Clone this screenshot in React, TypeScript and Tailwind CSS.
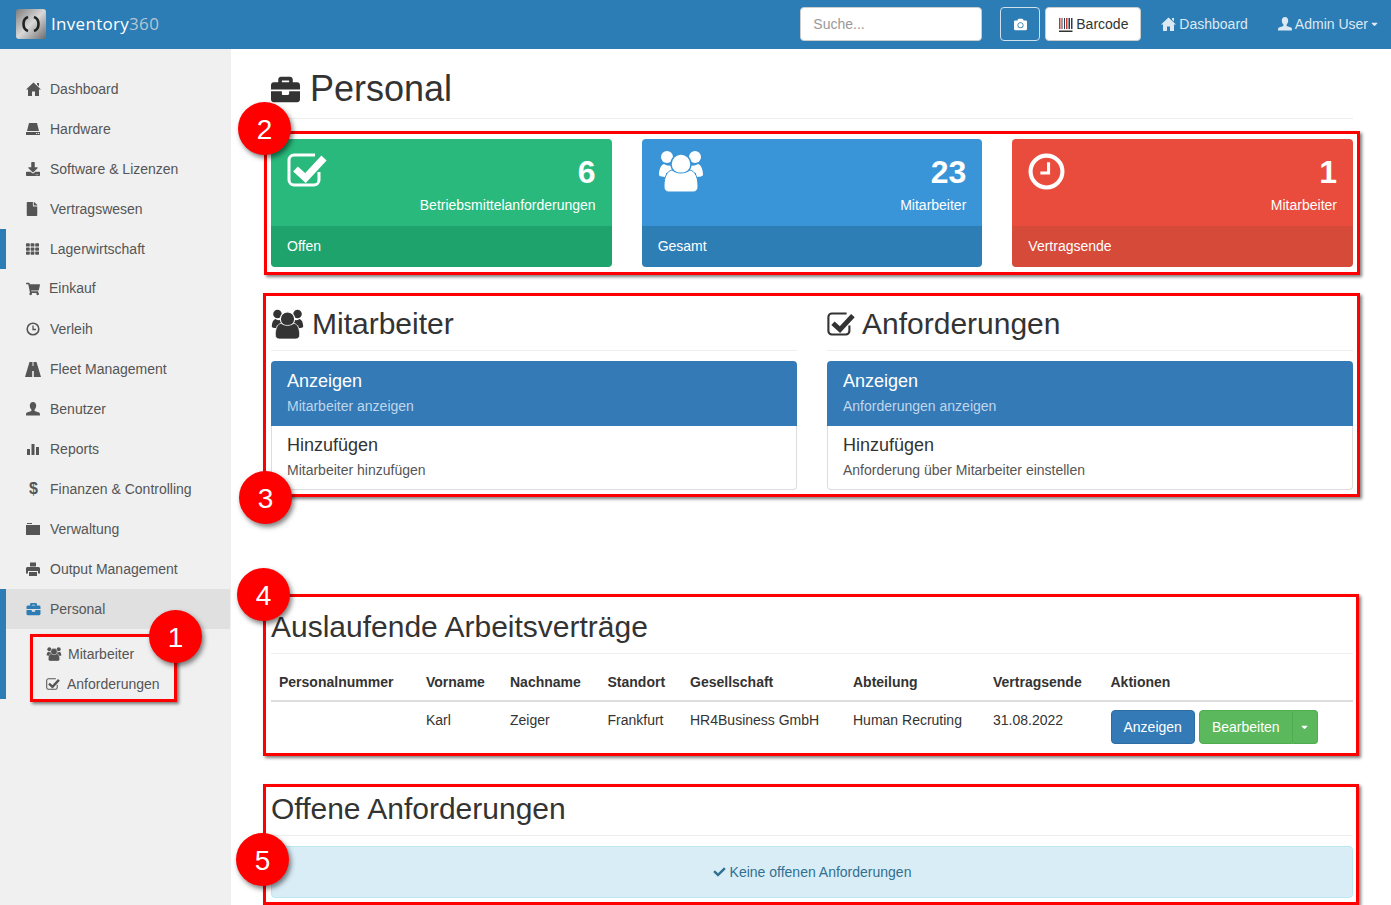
import { ReactNode } from "react";
import { FaBriefcase, FaCamera, FaCaretDown, FaCheck, FaDownload, FaFile, FaShoppingCart, FaTh } from "react-icons/fa";

function UsersIcon({ className, gap }: { className: string; gap: string }) {
  return (
    <svg viewBox="0 0 46 42" className={className} fill="currentColor">
      <circle cx="9" cy="7" r="6" />
      <circle cx="37" cy="7" r="6" />
      <path d="M1 25c0-6 2-10 5-11 3 2 6 2 8 1l6 8H8v4c-4 0-7-1-7-2z" />
      <path d="M45 25c0-6-2-10-5-11-3 2-6 2-8 1l-6 8h12v4c4 0 7-1 7-2z" />
      <circle cx="23" cy="14" r="10" stroke={gap} strokeWidth="1.5" />
      <path d="M6 36c0-9 3-15 8-16 5 4 13 4 18 0 5 1 8 7 8 16 0 4-2 6-6 6H12c-4 0-6-2-6-6z" stroke={gap} strokeWidth="1" />
    </svg>
  );
}

function CheckSquare({ className }: { className: string }) {
  return (
    <svg viewBox="0 0 40 34" className={className} fill="none" stroke="currentColor">
      <path d="M32 19v8a5 5 0 0 1-5 5H7a5 5 0 0 1-5-5V7a5 5 0 0 1 5-5h21" strokeWidth="3" />
      <path d="M8.5 16l10 9L37 5" strokeWidth="7" />
    </svg>
  );
}

function ClockIcon({ className }: { className: string }) {
  return (
    <svg viewBox="0 0 36 36" className={className} fill="none" stroke="currentColor">
      <circle cx="18" cy="18" r="15.5" strokeWidth="4" />
      <path d="M20 9v10.5h-8" strokeWidth="3" />
    </svg>
  );
}

function HomeIcon({ className }: { className: string }) {
  return (
    <svg viewBox="0 0 15 14" className={className} fill="currentColor">
      <path d="M7.5 0.5L15 7.5h-2V14H9V9.5H6V14H2V7.5H0zM11 1h2v3.5l-2-2z" />
    </svg>
  );
}

function UserIcon({ className }: { className: string }) {
  return (
    <svg viewBox="0 0 14 14" className={className} fill="currentColor">
      <path d="M7 0c2 0 3.2 1.5 3.2 3.6 0 1.6-.6 3.1-1.6 4v1.3l4.4 1.5c.8.3 1 1.1 1 3.1H0c0-2 .2-2.8 1-3.1l4.4-1.5V7.6c-1-.9-1.6-2.4-1.6-4C3.8 1.5 5 0 7 0z" />
    </svg>
  );
}

function RoadIcon({ className }: { className: string }) {
  return (
    <svg viewBox="0 0 16 15" className={className} fill="currentColor">
      <path d="M4.5 0h7L16 15H0z" />
      <rect x="7.5" y="0" width="1" height="4" fill="#f0f0f0" />
      <rect x="7.2" y="9" width="1.6" height="6" fill="#f0f0f0" />
    </svg>
  );
}

function PrintIcon({ className }: { className: string }) {
  return (
    <svg viewBox="0 0 14 14" className={className} fill="currentColor">
      <path d="M4 0.5h6v4H4zM1.5 5h11c.8 0 1.5.7 1.5 1.500V11.500H0V6.500C0 5.700.7 5 1.500 5z" />
      <rect x="2" y="9" width="10" height="1" fill="#f0f0f0" />
      <rect x="2" y="10" width="10" height="4" fill="#f0f0f0" />
      <rect x="3" y="10" width="8" height="4" />
    </svg>
  );
}

function HddIcon({ className }: { className: string }) {
  return (
    <svg viewBox="0 0 14 14" className={className} fill="currentColor">
      <path d="M3 1h8l2 8H1zM0 10h14v3H0z" />
      <rect x="10" y="11" width="1.2" height="1" fill="#f0f0f0" />
      <rect x="12" y="11" width="1.2" height="1" fill="#f0f0f0" />
    </svg>
  );
}

function StatsIcon({ className }: { className: string }) {
  return (
    <svg viewBox="0 0 14 14" className={className} fill="currentColor">
      <rect x="1" y="7" width="3" height="6" />
      <rect x="5.5" y="2" width="3" height="11" />
      <rect x="10" y="5" width="3" height="8" />
    </svg>
  );
}

function FolderIcon({ className }: { className: string }) {
  return (
    <svg viewBox="0 0 14 14" className={className} fill="currentColor">
      <path d="M1 1h5v1H1zM0 3h14v10H0z" />
    </svg>
  );
}

function ClockSmall({ className }: { className: string }) {
  return (
    <svg viewBox="0 0 14 14" className={className} fill="none" stroke="currentColor">
      <circle cx="7" cy="7" r="5.8" strokeWidth="1.6" />
      <path d="M7 3.5V7.5H10" strokeWidth="1.3" />
    </svg>
  );
}

const iconSm = "w-[14px] h-[14px]";

const NAV: { label: string; icon: ReactNode; bar?: boolean; nudge?: boolean }[] = [
  { label: "Dashboard", icon: <HomeIcon className="w-[15px] h-[14px]" /> },
  { label: "Hardware", icon: <HddIcon className={iconSm} /> },
  { label: "Software & Lizenzen", icon: <FaDownload className={iconSm} /> },
  { label: "Vertragswesen", icon: <FaFile className="w-[12px] h-[14px]" /> },
  { label: "Lagerwirtschaft", icon: <FaTh className="w-[13px] h-[14px]" />, bar: true },
  { label: "Einkauf", icon: <FaShoppingCart className={iconSm} />, nudge: true },
  { label: "Verleih", icon: <ClockSmall className={iconSm} /> },
  { label: "Fleet Management", icon: <RoadIcon className="w-[16px] h-[15px] -ml-px" /> },
  { label: "Benutzer", icon: <UserIcon className={iconSm} /> },
  { label: "Reports", icon: <StatsIcon className={iconSm} /> },
  { label: "Finanzen & Controlling", icon: <span className="pl-[3px] text-[16px] font-bold leading-none">$</span> },
  { label: "Verwaltung", icon: <FolderIcon className={iconSm} /> },
  { label: "Output Management", icon: <PrintIcon className={iconSm} /> },
];

const CARDS = [
  { value: "6", label: "Betriebsmittelanforderungen", footer: "Offen", top: "bg-[#29b97c]", bottom: "bg-[#1fa36c]", icon: <CheckSquare className="w-[40px] h-[34px]" />, iconPad: "pt-[14px]" },
  { value: "23", label: "Mitarbeiter", footer: "Gesamt", top: "bg-[#3995d7]", bottom: "bg-[#2e7eb6]", icon: <UsersIcon className="w-[46px] h-[42px]" gap="#3995d7" />, iconPad: "pt-[11px]" },
  { value: "1", label: "Mitarbeiter", footer: "Vertragsende", top: "bg-[#e94c3c]", bottom: "bg-[#d64a3a]", icon: <ClockIcon className="w-[37px] h-[37px]" />, iconPad: "pt-[14px]" },
];

const LISTS = [
  { title: "Mitarbeiter", icon: <UsersIcon className="w-[33px] h-[30px]" gap="#ffffff" />, gap: "gap-[8px]", show: "Mitarbeiter anzeigen", add: "Mitarbeiter hinzufügen" },
  { title: "Anforderungen", icon: <CheckSquare className="w-[28px] h-[24px]" />, gap: "gap-[7px]", show: "Anforderungen anzeigen", add: "Anforderung über Mitarbeiter einstellen" },
];

const COLS = [
  { head: "Personalnummer", w: "w-[147px]", cell: "" },
  { head: "Vorname", w: "w-[84px]", cell: "Karl" },
  { head: "Nachname", w: "w-[97.5px]", cell: "Zeiger" },
  { head: "Standort", w: "w-[82.5px]", cell: "Frankfurt" },
  { head: "Gesellschaft", w: "w-[163px]", cell: "HR4Business GmbH" },
  { head: "Abteilung", w: "w-[140px]", cell: "Human Recruting" },
  { head: "Vertragsende", w: "w-[117.5px]", cell: "31.08.2022" },
];

function Sidebar() {
  return (
    <aside className="w-[231px] shrink-0 bg-[#f0f0f0] pt-5 text-[14px] text-[#555]">
      {NAV.map((n) => (
        <div key={n.label} className="relative flex h-10 items-center pl-[26px]">
          {n.bar && <span className="absolute left-0 top-0 h-10 w-[6px] bg-[#2c7cb5]" />}
          <span className={n.nudge ? "flex w-[23px] items-center" : "flex w-[24px] items-center"}>{n.icon}</span>
          <span className={n.nudge ? "-mt-[2px]" : ""}>{n.label}</span>
        </div>
      ))}
      <div className="border-l-[6px] border-[#2c7cb5] h-[110px]">
        <div className="flex h-10 items-center bg-[#e0e0e0] pl-[20px] mr-px">
          <span className="flex w-[24px] items-center text-[#2c7cb5]"><FaBriefcase className="w-[15px] h-[14px]" /></span>
          <span>Personal</span>
        </div>
        <div className="flex h-[30px] items-center pl-[40px] mt-[10px]">
          <UsersIcon className="w-[16px] h-[14px] mr-[6px]" gap="#f0f0f0" />
          <span>Mitarbeiter</span>
        </div>
        <div className="flex h-[30px] items-center pl-[40px]">
          <CheckSquare className="w-[14px] h-[12px] mr-[7px]" />
          <span>Anforderungen</span>
        </div>
      </div>
    </aside>
  );
}

function Navbar() {
  return (
    <header className="flex h-[49px] items-center bg-[#2c7cb5] pb-px pr-[12px] text-[14px]">
      <svg viewBox="0 0 30 30" className="ml-[16px] h-[30px] w-[30px]">
        <defs>
          <linearGradient id="logo" x1="0" y1="0" x2="1" y2="1">
            <stop offset="0" stopColor="#7d7d7d" />
            <stop offset="0.5" stopColor="#d8d8d8" />
            <stop offset="1" stopColor="#6c6c6c" />
          </linearGradient>
        </defs>
        <rect width="30" height="30" rx="3" fill="url(#logo)" />
        <path d="M12 8c-6 2-6 12 0 14M18 8c6 2 6 12 0 14" fill="none" stroke="#222" strokeWidth="2.6" />
      </svg>
      <span className="ml-[5px] font-['Open_Sans',sans-serif] text-[17px] tracking-[0.3px] text-white">
        Inventory<span className="text-[#b4c6d2]">360</span>
      </span>
      <div className="ml-auto flex h-[34px] w-[182px] items-center rounded border border-[#ccc] bg-white px-3 text-[#999]">Suche...</div>
      <div className="ml-[18px] flex h-[34px] w-[40px] items-center justify-center rounded border border-[#cfe0ec] text-white">
        <FaCamera className="h-[13px] w-[13px]" />
      </div>
      <div className="ml-[5px] flex h-[34px] w-[96px] items-center justify-center gap-[3px] rounded border border-[#ccc] bg-white text-[#333]">
        <svg viewBox="0 0 15 15" className="h-[15px] w-[15px]">
          <path d="M1 1h1.5v11H1zM8 1h1.5v11H8z" fill="#c0392b" />
          <path d="M3.5 1h1v11h-1zM6 1h1v11H6zM10.5 1H12v11h-1.5zM13 1h1.5v11H13z" fill="#2c3e50" />
          <path d="M1 13.5h13.5V15H1z" fill="#333" />
        </svg>
        Barcode
      </div>
      <div className="ml-[20px] flex items-center gap-[3px] text-[#dde9f2]">
        <HomeIcon className="h-[14px] w-[15px]" />
        Dashboard
      </div>
      <div className="ml-[30px] flex items-center gap-[3px] text-[#dde9f2]">
        <UserIcon className="h-[14px] w-[14px]" />
        Admin User
        <FaCaretDown className="-ml-px h-[10px] w-[9px]" />
      </div>
    </header>
  );
}

function Content() {
  return (
    <main className="flex-1 pl-[40px] pr-[38px] pt-[20px] text-[14px] text-[#333]">
      <h1 className="flex items-center gap-[10px] border-b border-[#eee] pb-[9px] text-[36px] leading-[40px] text-[#333]">
        <FaBriefcase className="h-[29px] w-[29px]" />
        Personal
      </h1>

      <div className="mt-5 grid grid-cols-3 gap-[30px]">
        {CARDS.map((c) => (
          <div key={c.footer} className="overflow-hidden rounded text-white">
            <div className={`flex h-[87px] justify-between px-[16px] ${c.top}`}>
              <div className={c.iconPad}>{c.icon}</div>
              <div className="pt-[17px] text-right">
                <div className="text-[32px] font-bold leading-[33px]">{c.value}</div>
                <div className="mt-[6px] leading-5">{c.label}</div>
              </div>
            </div>
            <div className={`flex h-[41px] items-center px-[16px] ${c.bottom}`}>{c.footer}</div>
          </div>
        ))}
      </div>

      <div className="mt-[40px] grid grid-cols-2 gap-[30px]">
        {LISTS.map((l) => (
          <div key={l.title}>
            <h2 className={`flex items-center border-b border-[#eee] pb-[10px] text-[30px] leading-[33px] ${l.gap}`}>
              {l.icon}
              {l.title}
            </h2>
            <div className="mt-[10px]">
              <div className="h-[65px] rounded-t bg-[#337ab7] px-4 pt-[8px]">
                <div className="text-[18px] leading-[24px] text-white">Anzeigen</div>
                <div className="mt-[3px] leading-5 text-[#c0d6ea]">{l.show}</div>
              </div>
              <div className="h-[64px] rounded-b border border-t-0 border-[#ddd] px-[15px] pt-[7px]">
                <div className="text-[18px] leading-[24px]">Hinzufügen</div>
                <div className="mt-[3px] leading-5 text-[#555]">{l.add}</div>
              </div>
            </div>
          </div>
        ))}
      </div>

      <h2 className="mt-[120px] border-b border-[#eee] pb-[10px] text-[30px] leading-[33px]">Auslaufende Arbeitsverträge</h2>
      <table className="mt-[10px] w-full table-fixed border-collapse">
        <thead>
          <tr className="border-b-2 border-[#ddd]">
            {COLS.map((c) => (
              <th key={c.head} className={`p-2 text-left font-bold leading-5 ${c.w}`}>{c.head}</th>
            ))}
            <th className="p-2 text-left font-bold leading-5">Aktionen</th>
          </tr>
        </thead>
        <tbody>
          <tr>
            {COLS.map((c) => (
              <td key={c.head} className="p-2 align-top leading-5">{c.cell}</td>
            ))}
            <td className="p-2 align-top">
              <div className="flex gap-[4px] text-white">
                <div className="flex h-[34px] items-center rounded border border-[#2e6da4] bg-[#337ab7] px-3">Anzeigen</div>
                <div className="flex h-[34px]">
                  <div className="flex items-center rounded-l border border-[#4cae4c] bg-[#5cb85c] px-3">Bearbeiten</div>
                  <div className="flex w-[25.5px] items-center justify-center rounded-r border border-l-0 border-[#4cae4c] bg-[#5cb85c]">
                    <FaCaretDown className="h-[10px] w-[9px]" />
                  </div>
                </div>
              </div>
            </td>
          </tr>
        </tbody>
      </table>

      <h2 className="mt-[40px] border-b border-[#eee] pb-[10px] text-[30px] leading-[33px]">Offene Anforderungen</h2>
      <div className="mt-[10px] flex h-[52px] items-center justify-center gap-[4px] rounded border border-[#bce8f1] bg-[#d9edf7] text-[#31708f]">
        <FaCheck className="h-[12px] w-[13px]" />
        Keine offenen Anforderungen
      </div>
    </main>
  );
}

const BOXES = [
  "left-[30px] top-[634px] w-[147px] h-[68px]",
  "left-[264px] top-[131px] w-[1096px] h-[144px]",
  "left-[263px] top-[293px] w-[1097px] h-[204px]",
  "left-[263px] top-[594px] w-[1096px] h-[162px]",
  "left-[263px] top-[784px] w-[1096px] h-[121px]",
];

const BADGES = [
  { n: "1", pos: "left-[149px] top-[610px]" },
  { n: "2", pos: "left-[238px] top-[102px]" },
  { n: "3", pos: "left-[239px] top-[471px]" },
  { n: "4", pos: "left-[237px] top-[568px]" },
  { n: "5", pos: "left-[236px] top-[833px]" },
];

export default function App() {
  return (
    <div className="relative h-[905px] overflow-hidden bg-white font-['Liberation_Sans',Arial,sans-serif]">
      <Navbar />
      <div className="flex h-[856px]">
        <Sidebar />
        <Content />
      </div>
      {BOXES.map((b) => (
        <div key={b} className={`absolute border-[3px] border-[#f00] shadow-[2px_2px_3px_rgba(0,0,0,0.5)] ${b}`} />
      ))}
      {BADGES.map((b) => (
        <div key={b.n} className={`absolute flex h-[53px] w-[53px] items-center justify-center rounded-full bg-[#f00] pt-[2px] text-[28px] text-white shadow-[2px_3px_5px_rgba(0,0,0,0.5)] ${b.pos}`}>
          {b.n}
        </div>
      ))}
    </div>
  );
}
